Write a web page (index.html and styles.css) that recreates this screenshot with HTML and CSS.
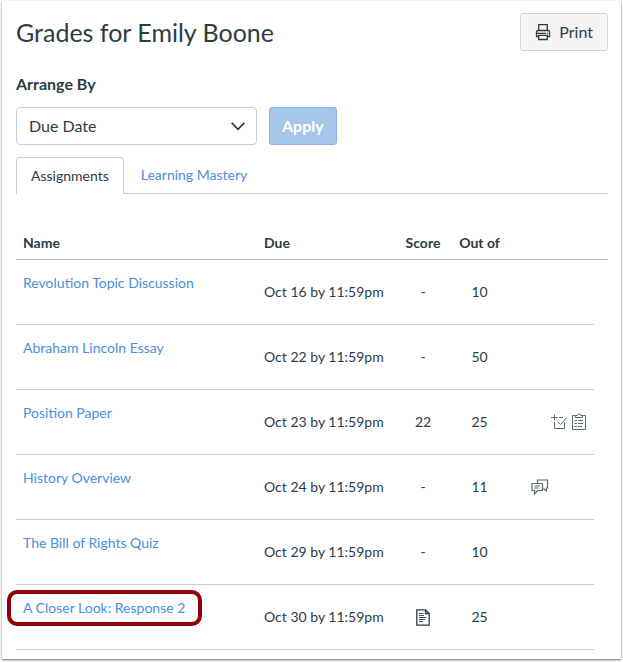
FILE: index.html
```html
<!DOCTYPE html>
<html lang="en">
<head>
<meta charset="utf-8">
<meta name="viewport" content="width=device-width, initial-scale=1">
<title>Grades for Emily Boone</title>
<link rel="stylesheet" href="styles.css">
</head>
<body>
<main class="page">
  <header class="page-header">
    <h1 class="title">Grades for Emily Boone</h1>
    <button class="btn btn-print" type="button">
      <svg class="icon" width="16" height="18" viewBox="0 0 16 18" fill="none" stroke="currentColor" stroke-width="1.300" aria-hidden="true"><path d="M3.700 7.500V1.700h8.600v5.800M3.700 13.500H1.500V9q0-1.500 1.500-1.500h10q1.500 0 1.500 1.500v4.500h-2.200M3.700 12.300h8.600v4.200H3.700zM1.500 10.300h9.500M12 10.300h1"/></svg>
      Print
    </button>
  </header>

  <form class="arrange">
    <label class="arrange-label" for="arrange-by">Arrange By</label>
    <div class="arrange-row">
      <div class="select-wrap">
        <select class="select" id="arrange-by"><option>Due Date</option></select>
        <svg class="chevron" width="14" height="9" viewBox="0 0 14 9" fill="none" stroke="currentColor" stroke-width="1.700" aria-hidden="true"><path d="M.7.8 7 7.300 13.300.8"/></svg>
      </div>
      <button class="btn btn-apply" type="button">Apply</button>
    </div>
  </form>

  <nav class="tabs">
    <a class="tab tab-active" href="#assignments">Assignments</a>
    <a class="tab" href="#mastery">Learning Mastery</a>
  </nav>

  <table class="grades" id="assignments">
    <colgroup><col><col class="col-due"><col class="col-score"><col class="col-out"><col class="col-icons"><col class="col-end"></colgroup>
    <thead>
      <tr><th>Name</th><th>Due</th><th class="num">Score</th><th class="num">Out of</th><th></th><th></th></tr>
    </thead>
    <tbody>
      <tr><td class="name"><a href="#a1">Revolution Topic Discussion</a></td><td>Oct 16 by 11:59pm</td><td class="num">-</td><td class="num">10</td><td></td></tr>
      <tr><td class="name"><a href="#a2">Abraham Lincoln Essay</a></td><td>Oct 22 by 11:59pm</td><td class="num">-</td><td class="num">50</td><td></td></tr>
      <tr><td class="name"><a href="#a3">Position Paper</a></td><td>Oct 23 by 11:59pm</td><td class="num">22</td><td class="num">25</td>
        <td><div class="actions">
          <svg class="icon" width="16" height="16" viewBox="0 0 16 16" fill="none" stroke="currentColor" aria-hidden="true"><path d="M0 3.500h6.500M3.500.5v6M8 3.500h4M3.500 8v6.500h10V8.500M6.500 7.500l3 3 6-6.500"/></svg>
          <svg class="icon" width="16" height="18" viewBox="0 0 16 18" fill="none" stroke="currentColor" aria-hidden="true"><path d="M4.500 2.500h-3v14h13v-14h-3M4.500 4.500v-2h2q0-1.500 1.500-1.500t1.500 1.500h2v2zM3.500 7.500h2.500M7 7.500h5M3.500 10.500h2.500M7 10.500h5M3.500 13.500h2.500M7 13.500h4"/></svg>
        </div></td></tr>
      <tr><td class="name"><a href="#a4">History Overview</a></td><td>Oct 24 by 11:59pm</td><td class="num">-</td><td class="num">11</td>
        <td><div class="actions actions-comment">
          <svg class="icon" width="18" height="16" viewBox="0 0 18 16" fill="none" stroke="currentColor" stroke-width="1.200" aria-hidden="true"><path d="M6.500 4V1h10v8h-1v3l-3-2.500M1 4.500h10.500v7h-5L3.500 15v-3.500H1zM3.500 7h5.500M3.500 9h4"/></svg>
        </div></td></tr>
      <tr><td class="name"><a href="#a5">The Bill of Rights Quiz</a></td><td>Oct 29 by 11:59pm</td><td class="num">-</td><td class="num">10</td><td></td></tr>
      <tr><td class="name"><a class="highlight" href="#a6">A Closer Look: Response 2</a></td><td>Oct 30 by 11:59pm</td>
        <td class="num"><svg class="icon icon-doc" width="14" height="17" viewBox="0 0 14 17" fill="none" stroke="currentColor" stroke-width="1.300" aria-label="Submitted" role="img"><path d="M.8.8h8.700l3.700 3.700v11.700H.8zM9.500.8v3.700h3.700"/><path stroke-width=".9" d="M3 4.500h4.500M3 6.500h5M3 8.500h7.500M3 10.500h6M3 12.500h4"/></svg></td>
        <td class="num">25</td><td></td></tr>
    </tbody>
  </table>
</main>
</body>
</html>
```

FILE: styles.css
```css
* { box-sizing: border-box; }

body {
  margin: 0;
  padding: 1px 2px 3px;
  background: #fff;
  color: #2d3b45;
  font-family: Lato, sans-serif;
  font-size: 14px;
  line-height: 20px;
}

a { color: #4a90d9; text-decoration: none; }

.page {
  padding: 12px 13px 9px 14px;
  background: #fff;
  box-shadow: 0 1px 2px 0 rgba(0, 0, 0, 0.6);
}

.page-header {
  display: flex;
  justify-content: space-between;
  align-items: center;
}

.title {
  margin: 0;
  font-size: 25px;
  font-weight: 400;
  line-height: 38px;
}

.icon { display: block; flex: none; }

.btn {
  display: flex;
  align-items: center;
  justify-content: center;
  height: 38px;
  border: 1px solid #d3d6d8;
  border-radius: 3px;
  font: 16px/24px Lato, sans-serif;
}

.btn-print {
  gap: 8px;
  padding: 0 14px;
  background: #f5f5f5;
  color: #2d3b45;
}

.btn-apply {
  padding: 0 12px;
  border-color: #91b4dc;
  background: #a5c7ea;
  color: #fff;
  font-weight: 700;
}

.arrange { margin-top: 22px; }

.arrange-label {
  display: block;
  font-size: 16px;
  font-weight: 700;
  line-height: 22px;
}

.arrange-row {
  display: flex;
  gap: 12px;
  margin-top: 12px;
}

.select-wrap {
  position: relative;
  width: 241px;
}

.select {
  width: 100%;
  height: 38px;
  padding: 0 12px;
  border: 1px solid #c7cdd1;
  border-radius: 4px;
  appearance: none;
  background: #fff;
  color: #2d3b45;
  font: 16px/24px Lato, sans-serif;
}

.chevron {
  position: absolute;
  top: 15px;
  right: 12px;
  pointer-events: none;
}

.tabs {
  display: flex;
  margin-top: 12px;
  border-bottom: 1px solid #c7cdd1;
}

.tab {
  padding: 8px 17px;
  border-bottom: 0;
}

.tab-active {
  margin-bottom: -1px;
  padding: 8px 14px;
  border: 1px solid #c7cdd1;
  border-bottom: 0;
  border-radius: 4px 4px 0 0;
  background: #fff;
  color: #2d3b45;
}

.grades {
  width: 100%;
  margin-top: 32px;
  border-spacing: 0;
  table-layout: fixed;
}

.col-due { width: 138px; }
.col-score { width: 56px; }
.col-out { width: 57px; }
.col-icons { width: 86px; }
.col-end { width: 14px; }

.grades th {
  height: 34px;
  padding: 0 7px;
  border-bottom: 1px solid #b5babe;
  font-weight: 700;
  text-align: left;
}

.grades td {
  height: 65px;
  padding: 0 7px;
  border-bottom: 1px solid #c7cdd1;
  white-space: nowrap;
}

.grades .name {
  padding-top: 13px;
  vertical-align: top;
}

.grades .num {
  padding: 0;
  text-align: center;
}

.icon-doc { margin: 0 auto; }

.actions {
  display: flex;
  justify-content: flex-end;
  align-items: center;
  gap: 4px;
  color: #5f6970;
}

.actions-comment { padding-right: 38px; }

.highlight { position: relative; }

.highlight::after {
  content: "";
  position: absolute;
  inset: -9px -17px -10px -16px;
  border: 4px solid #930004;
  border-radius: 10px;
}
```
